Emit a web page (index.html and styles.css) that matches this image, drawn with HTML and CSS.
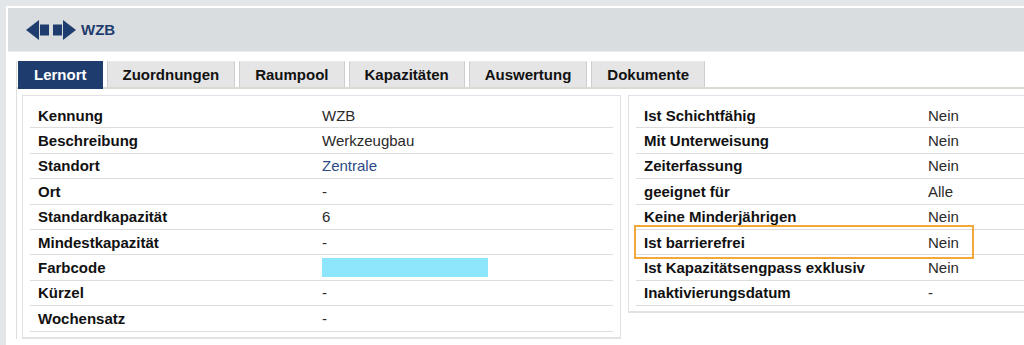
FILE: index.html
```html
<!DOCTYPE html>
<html lang="de">
<head>
  <meta charset="UTF-8">
  <title>Lernort WZB</title>
  <link rel="stylesheet" href="styles.css">
</head>
<body>
  <div class="frame">
    <header class="topbar">
      <svg class="nav-arrows" width="50" height="20" viewBox="0 0 50 20">
        <polygon points="0,10 13,0 13,20" fill="#1f3c6e"/>
        <rect x="14" y="4.5" width="9" height="11" fill="#1f3c6e"/>
        <rect x="27" y="4.5" width="9" height="11" fill="#1f3c6e"/>
        <polygon points="37,0 50,10 37,20" fill="#1f3c6e"/>
      </svg>
      <span class="title">WZB</span>
    </header>

    <div class="content">
      <div class="panel">
        <nav class="tabs">
          <a class="tab active">Lernort</a>
          <a class="tab">Zuordnungen</a>
          <a class="tab">Raumpool</a>
          <a class="tab">Kapazitäten</a>
          <a class="tab">Auswertung</a>
          <a class="tab">Dokumente</a>
        </nav>

        <div class="panel-body">
          <section class="card">
            <div class="row"><span class="label">Kennung</span><span class="value">WZB</span></div>
            <div class="row"><span class="label">Beschreibung</span><span class="value">Werkzeugbau</span></div>
            <div class="row"><span class="label">Standort</span><span class="value link">Zentrale</span></div>
            <div class="row"><span class="label">Ort</span><span class="value">-</span></div>
            <div class="row"><span class="label">Standardkapazität</span><span class="value">6</span></div>
            <div class="row"><span class="label">Mindestkapazität</span><span class="value">-</span></div>
            <div class="row"><span class="label">Farbcode</span><span class="value"><span class="swatch"></span></span></div>
            <div class="row"><span class="label">Kürzel</span><span class="value">-</span></div>
            <div class="row"><span class="label">Wochensatz</span><span class="value">-</span></div>
          </section>

          <section class="card">
            <div class="row"><span class="label">Ist Schichtfähig</span><span class="value">Nein</span></div>
            <div class="row"><span class="label">Mit Unterweisung</span><span class="value">Nein</span></div>
            <div class="row"><span class="label">Zeiterfassung</span><span class="value">Nein</span></div>
            <div class="row"><span class="label">geeignet für</span><span class="value">Alle</span></div>
            <div class="row"><span class="label">Keine Minderjährigen</span><span class="value">Nein</span></div>
            <div class="row marked"><span class="label">Ist barrierefrei</span><span class="value">Nein</span></div>
            <div class="row"><span class="label">Ist Kapazitätsengpass exklusiv</span><span class="value">Nein</span></div>
            <div class="row"><span class="label">Inaktivierungsdatum</span><span class="value">-</span></div>
          </section>
        </div>
      </div>
    </div>
  </div>
</body>
</html>
```

FILE: styles.css
```css
html, body {
  margin: 0;
  overflow: hidden;
}

body {
  background-color: #e3e6e9;
  font-family: 'Liberation Sans', Arial, sans-serif;
  font-size: 15px;
  color: #111;
  padding: 6px 0 0 6px;
  height: 345px;
  box-sizing: border-box;
}

.frame {
  background-color: #fff;
  padding: 2px 0 0 2px;
  height: 337px;
  overflow: hidden;
}

.topbar {
  display: flex;
  align-items: center;
  height: 43px;
  padding-left: 18px;
  background-color: #d9dde0;
  border-bottom: 1px solid #eaecee;
}

.nav-arrows {
  display: block;
}

.title {
  margin-left: 5px;
  font-weight: bold;
  color: #1f3c6e;
}

.content {
  padding: 9px 0 0 8px;
}

.panel {
  border-left: 1px solid #dedede;
}

.tabs {
  display: flex;
  gap: 4px;
  padding-left: 1px;
  border-bottom: 2px solid #d9dad2;
}

.tab {
  display: block;
  height: 25px;
  line-height: 25px;
  padding: 0 15px;
  font-weight: bold;
  color: #111;
  background-color: #e5e5e5;
  border: 1px solid #cdcdcd;
  border-top-color: #e9e9e9;
  border-bottom: none;
}

.tab.active {
  background-color: #1f3c6e;
  border-color: #1f3c6e;
  color: #fff;
  height: 27px;
  margin-bottom: -2px;
}

.panel-body {
  display: grid;
  grid-template-columns: 599px 599px;
  gap: 7px;
  align-items: start;
  padding: 6px 0 0 5px;
}

.card {
  border: 1px solid #e2e2e2;
  border-bottom-width: 2px;
  padding: 7px 7px 5px 7px;
}

.row {
  position: relative;
  display: grid;
  grid-template-columns: 292px 1fr;
  align-items: center;
  height: 25.4px;
  box-sizing: border-box;
  border-bottom: 1px solid #dddddd;
}

.label {
  padding-left: 8px;
  font-weight: bold;
  color: #111;
}

.value {
  color: #2a2a2a;
  display: flex;
  align-items: center;
}

.value.link {
  color: #2b4a86;
}

.swatch {
  display: block;
  width: 166px;
  height: 19px;
  background-color: #8ee6fc;
}

.marked::after {
  content: '';
  position: absolute;
  left: -2px;
  top: -5px;
  width: 336px;
  height: 30px;
  border: 2px solid #f4a83a;
}
```
